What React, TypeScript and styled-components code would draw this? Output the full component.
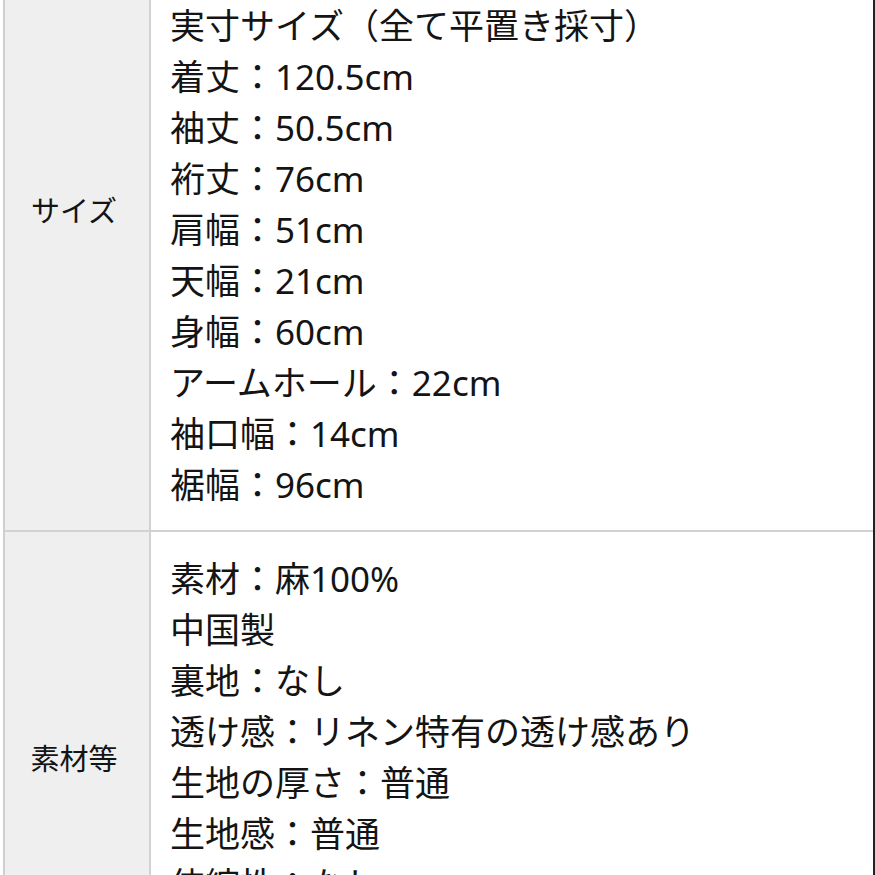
import React from "react";
import styled, {createGlobalStyle} from "styled-components";

const GlobalStyle = createGlobalStyle`
  html, body {
    margin: 0;
    padding: 0;
    background: #ffffff;
    overflow: hidden;
  }
  body {
    font-family: "Noto Sans", "Noto Sans CJK JP", sans-serif;
    color: #141414;
  }
`;

const Screen = styled.div`
  width: 875px;
  height: 875px;
  overflow: hidden;
  border-right: 2px solid #222;
  box-sizing: border-box;
`;

// the page is scrolled: the top of the table sits above the viewport
const SpecTable = styled.div`
  margin-top: -112px;
  margin-left: 3px;
  border-left: 2px solid #cfcfcf;
  display: flex;
  flex-direction: column;
`;

const SpecRow = styled.div`
  display: grid;
  grid-template-columns: 146px 1fr;
  border-bottom: 2px solid #d2d2d2;
`;

const LabelCell = styled.div`
  background: #efefef;
  border-right: 2px solid #d2d2d2;
  display: flex;
  align-items: center;
  justify-content: center;
  font-family: "Noto Sans CJK JP", sans-serif;
  font-size: 29px;
  padding-right: 6px;
`;

const ValueCell = styled.div<{$padTop: number}>`
  background: #ffffff;
  padding: ${(p) => p.$padTop}px 20px 20px 19px;
`;

const Line = styled.div`
  font-size: 35px;
  line-height: 51px;
  white-space: nowrap;
`;

interface ISpec {
  label: string;
  padTop: number;
  lines: string[];
}

const specs: ISpec[] = [
  {
    label: "サイズ",
    padTop: 10,
    lines: [
      "サイズ：フリー",
      "（メーカー表記）",
      "実寸サイズ（全て平置き採寸）",
      "着丈：120.5cm",
      "袖丈：50.5cm",
      "裄丈：76cm",
      "肩幅：51cm",
      "天幅：21cm",
      "身幅：60cm",
      "アームホール：22cm",
      "袖口幅：14cm",
      "裾幅：96cm",
    ],
  },
  {
    label: "素材等",
    padTop: 21,
    lines: [
      "素材：麻100%",
      "中国製",
      "裏地：なし",
      "透け感：リネン特有の透け感あり",
      "生地の厚さ：普通",
      "生地感：普通",
      "伸縮性：なし",
      "光沢感：なし",
    ],
  },
];

const App: React.FC = () => {
  return (
    <>
      <GlobalStyle />
      <Screen>
        <SpecTable>
          {specs.map((spec) => (
            <SpecRow key={spec.label}>
              <LabelCell>{spec.label}</LabelCell>
              <ValueCell $padTop={spec.padTop}>
                {spec.lines.map((line, index) => (
                  <Line key={index}>{line}</Line>
                ))}
              </ValueCell>
            </SpecRow>
          ))}
        </SpecTable>
      </Screen>
    </>
  );
};

export default App;
